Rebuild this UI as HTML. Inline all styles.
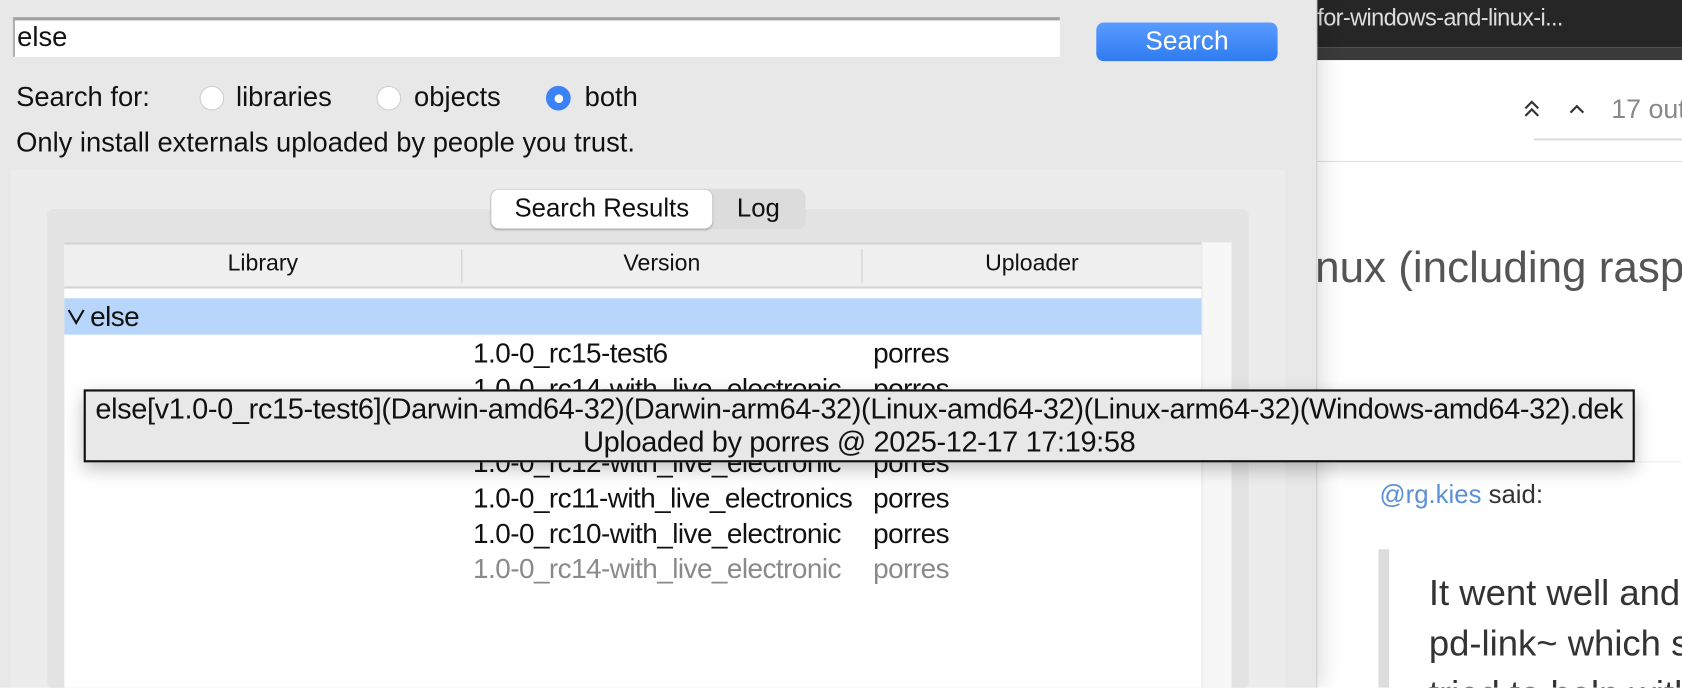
<!DOCTYPE html>
<html style="width:1682px;height:688px;overflow:hidden"><head><meta charset="utf-8"><style>
*{margin:0;padding:0;box-sizing:border-box}
body{width:1682px;height:688px;overflow:hidden;position:relative;background:#fff;font-family:"Liberation Sans",sans-serif;color:#111}
#wrap{position:absolute;left:0;top:0;width:1568px;height:641.4px;overflow:hidden;transform:scale(1.0727);transform-origin:0 0}
.abs{position:absolute;white-space:nowrap}
#left{position:absolute;left:0;top:0;width:1228px;height:642px;background:#e8e8e8;border-right:1px solid #cfcfcf;box-shadow:6px 0 18px rgba(0,0,0,.12)}
.radio{position:absolute;width:23px;height:23px;border-radius:50%;background:#fff;border:1px solid #cfcfcf}
.t{font-size:25.5px}
.row{position:absolute;font-size:26px;letter-spacing:-0.5px;line-height:30px}
</style></head><body><div id="wrap">
<!-- right page -->
<div class="abs" style="left:1218px;top:0;width:350px;height:44px;background:#262626"></div>
<div class="abs" style="left:1218px;top:44px;width:350px;height:12px;background:#3a3a3a"></div>
<div class="abs" style="left:1228px;top:4px;font-size:22px;color:#ddd;letter-spacing:-0.6px">for-windows-and-linux-i...</div>
<div class="abs" style="left:1218px;top:150px;width:350px;height:1px;background:#e0e0e0"></div>
<svg class="abs" style="left:1418px;top:92px" width="20" height="20" viewBox="0 0 20 20"><path d="M4 9 L10 3 L16 9 M4 16 L10 10 L16 16" fill="none" stroke="#333" stroke-width="2"/></svg>
<svg class="abs" style="left:1460px;top:92px" width="20" height="20" viewBox="0 0 20 20"><path d="M4 13 L10 7 L16 13" fill="none" stroke="#333" stroke-width="2"/></svg>
<div class="abs" style="left:1502px;top:88px;font-size:25px;color:#888">17 out</div>
<div class="abs" style="left:1430px;top:129px;width:140px;height:2px;background:#ddd"></div>
<div class="abs" style="left:1226px;top:226px;font-size:41px;color:#555">nux (including rasp</div>
<div class="abs" style="left:1250px;top:430px;width:320px;height:1px;background:#eee"></div>
<div class="abs" style="left:1286px;top:448px;font-size:24px;color:#333"><span style="color:#5b8fd6">@rg.kies</span> said:</div>
<div class="abs" style="left:1285px;top:512px;width:10px;height:130px;background:#ddd"></div>
<div class="abs" style="left:1332px;top:534px;font-size:34px;color:#333">It went well and</div>
<div class="abs" style="left:1332px;top:581px;font-size:34px;color:#333">pd-link~ which s</div>
<div class="abs" style="left:1332px;top:628px;font-size:34px;color:#333">tried to help with</div>

<div id="left">
  <div class="abs" style="left:12px;top:16px;width:976px;height:37px;background:#fff;border-top:3px solid #a0a0a0;border-left:2px solid #b0b0b0"></div>
  <div class="abs t" style="left:16px;top:21px">else</div>
  <div class="abs" style="left:1022px;top:21px;width:169px;height:36px;border-radius:7px;background:linear-gradient(#5a9cff,#2f7bf0);color:#fff;font-size:24.5px;text-align:center;line-height:36px">Search</div>
  <div class="abs t" style="left:15px;top:77px">Search for:</div>
  <div class="radio" style="left:186px;top:80px"></div>
  <div class="abs t" style="left:220px;top:77px">libraries</div>
  <div class="radio" style="left:351px;top:80px"></div>
  <div class="abs t" style="left:386px;top:77px">objects</div>
  <div class="radio" style="left:509px;top:80px;background:#3b82f6;border-color:#3b82f6"><div style="position:absolute;left:7px;top:7px;width:8px;height:8px;border-radius:50%;background:#fff"></div></div>
  <div class="abs t" style="left:545px;top:77px">both</div>
  <div class="abs t" style="left:15px;top:119px">Only install externals uploaded by people you trust.</div>

  <div class="abs" style="left:10px;top:158px;width:1188px;height:484px;background:#ececec"></div>
  <div class="abs" style="left:44px;top:195px;width:1120px;height:447px;background:#e3e3e3;border-radius:6px"></div>
  <div class="abs" style="left:457px;top:176px;width:294px;height:38px;background:#dcdcdc;border-radius:8px"></div>
  <div class="abs" style="left:458px;top:177px;width:206px;height:36px;background:#fff;border-radius:7px;box-shadow:0 1px 2px rgba(0,0,0,.25);font-size:24px;text-align:center;line-height:36px">Search Results</div>
  <div class="abs" style="left:664px;top:177px;width:86px;height:36px;font-size:24px;text-align:center;line-height:36px">Log</div>

  <div class="abs" style="left:60px;top:226px;width:1088px;height:416px;background:#fff"></div>
  <div class="abs" style="left:1120px;top:226px;width:28px;height:416px;background:#f7f7f7;border-left:1px solid #e6e6e6"></div>
  <div class="abs" style="left:60px;top:226px;width:1060px;height:43px;background:#efefef;border-top:2px solid #d4d4d4;border-bottom:2px solid #d4d4d4"></div>
  <div class="abs" style="left:430px;top:232px;width:1px;height:32px;background:#d0d0d0"></div>
  <div class="abs" style="left:803px;top:232px;width:1px;height:32px;background:#d0d0d0"></div>
  <div class="abs" style="left:60px;top:233px;width:370px;text-align:center;font-size:21.5px">Library</div>
  <div class="abs" style="left:431px;top:233px;width:372px;text-align:center;font-size:21.5px">Version</div>
  <div class="abs" style="left:804px;top:233px;width:316px;text-align:center;font-size:21.5px">Uploader</div>
  <div class="abs" style="left:60px;top:278px;width:1060px;height:34px;background:#b8d6fb"></div>
  <svg class="abs" style="left:62px;top:287px" width="18" height="16" viewBox="0 0 18 16"><path d="M2 2 L9 14 L16 2" fill="none" stroke="#111" stroke-width="2"/></svg>
  <div class="row" style="left:84px;top:280px">else</div>
  <div class="row" style="left:441px;top:314px">1.0-0_rc15-test6</div><div class="row" style="left:814px;top:314px">porres</div>
  <div class="row" style="left:441px;top:347px;width:358px;overflow:hidden">1.0-0_rc14-with_live_electronic</div><div class="row" style="left:814px;top:347px">porres</div>
  <div class="row" style="left:441px;top:416px;width:358px;overflow:hidden">1.0-0_rc12-with_live_electronic</div><div class="row" style="left:814px;top:416px">porres</div>
  <div class="row" style="left:441px;top:449px;width:358px;overflow:hidden">1.0-0_rc11-with_live_electronics</div><div class="row" style="left:814px;top:449px">porres</div>
  <div class="row" style="left:441px;top:482px;width:358px;overflow:hidden">1.0-0_rc10-with_live_electronic</div><div class="row" style="left:814px;top:482px">porres</div>
  <div class="row" style="left:441px;top:515px;width:358px;overflow:hidden;color:#8a8a8a">1.0-0_rc14-with_live_electronic</div><div class="row" style="left:814px;top:515px;color:#8a8a8a">porres</div>
</div>

<div class="abs" style="left:78px;top:363px;width:1446px;height:68px;background:#e8e8e8;border:2px solid #111;box-shadow:0 6px 16px rgba(0,0,0,.25);text-align:center;font-size:27px;line-height:31px;padding-top:1px;letter-spacing:-0.35px">
  <div>else[v1.0-0_rc15-test6](Darwin-amd64-32)(Darwin-arm64-32)(Linux-amd64-32)(Linux-arm64-32)(Windows-amd64-32).dek</div>
  <div>Uploaded by porres @ 2025-12-17 17:19:58</div>
</div>
</div></body></html>
